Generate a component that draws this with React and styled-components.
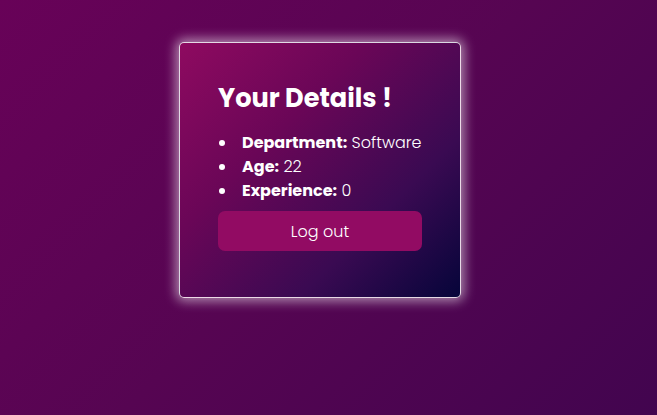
import React from "react";
import styled, { createGlobalStyle } from "styled-components";

const Global = createGlobalStyle`
  html, body { margin: 0; padding: 0; }
  body {
    width: 657px;
    height: 415px;
    overflow: hidden;
    font-family: "Poppins", "Open Sans", "Noto Sans", sans-serif;
    background: linear-gradient(135deg, #680258 0%, #560552 50%, #42054f 100%);
  }
`;

const Page = styled.div`
  display: flex;
  justify-content: center;
  padding: 42px 17px 0 0;
  box-sizing: border-box;
  height: 415px;
`;

const Card = styled.div`
  width: 282px;
  height: 256px;
  box-sizing: border-box;
  padding: 37px 20px 0 38px;
  border: 1px solid rgba(255, 255, 255, 0.85);
  border-radius: 5px;
  background: linear-gradient(135deg, #8e0a60 0%, #6a0657 35%, #3a0a52 70%, #06053a 100%);
  box-shadow: 0 0 12px 3px rgba(255, 255, 255, 0.55);
  color: #fff;
  display: flex;
  flex-direction: column;
  align-items: flex-start;
`;

const Title = styled.h1`
  margin: 0;
  font-size: 25.6px;
  font-weight: 700;
  line-height: 36px;
`;

const List = styled.ul`
  margin: 15px 0 0 0;
  padding: 0 0 0 1px;
  list-style: none;
`;

const Item = styled.li`
  font-size: 16px;
  line-height: 24px;
  font-weight: 300;
  white-space: nowrap;

  &::before {
    content: "";
    display: inline-block;
    width: 6px;
    height: 6px;
    border-radius: 50%;
    background: #fff;
    margin: 0 17px 2px 0;
    vertical-align: middle;
  }
`;

const Label = styled.strong`
  font-weight: 700;
`;

const Button = styled.button`
  margin-top: 8px;
  width: 204px;
  height: 40px;
  border: none;
  border-radius: 7px;
  background: #920b63;
  color: #fff;
  font-family: inherit;
  font-size: 16px;
  font-weight: 300;
  cursor: pointer;
`;

export default function App() {
  return (
    <>
      <Global />
      <Page>
        <Card>
          <Title>Your Details !</Title>
          <List>
            <Item><Label>Department:</Label> Software</Item>
            <Item><Label>Age:</Label> 22</Item>
            <Item><Label>Experience:</Label> 0</Item>
          </List>
          <Button>Log out</Button>
        </Card>
      </Page>
    </>
  );
}
